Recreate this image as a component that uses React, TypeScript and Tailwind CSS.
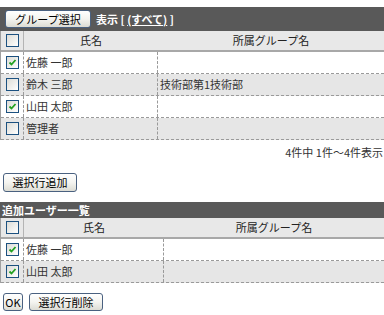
const FONT = "font-['MS_UI_Gothic','Noto_Sans_CJK_JP',sans-serif]";

function Check({ on = false }: { on?: boolean }) {
  return (
    <span className="flex h-[13px] w-[13px] items-center justify-center border border-[#1c5180] bg-gradient-to-br from-[#dcdcd7] to-white">
      {on && (
        <svg width="9" height="9" viewBox="0 0 9 9">
          <path d="M1.5 4.5 L3.5 6.5 L7.5 2" fill="none" stroke="#21a121" strokeWidth="1.8" />
        </svg>
      )}
    </span>
  );
}

function Btn({ children, className = "" }: { children: React.ReactNode; className?: string }) {
  return (
    <button
      className={`flex items-center justify-center rounded-[3px] border border-[#4a6180] bg-gradient-to-b from-white via-[#f4f4f0] to-[#dcdcd4] text-[11px] text-black ${className}`}
    >
      {children}
    </button>
  );
}

type Row = { name: string; group: string; on: boolean };

function Table({ rows, nameW }: { rows: Row[]; nameW: number }) {
  const cols = nameW === 134 ? "grid-cols-[23px_134px_1fr]" : "grid-cols-[23px_140px_1fr]";
  return (
    <div className="border-l border-[#a0a0a0]">
      <div className={`grid h-[21px] ${cols} border-b-2 border-[#a8a8a8] bg-[#e8e8e8] text-[11px] text-[#222]`}>
        <div className="flex items-center justify-center border-r border-[#b4b4b4]">
          <Check />
        </div>
        <div className="flex items-center justify-center">氏名</div>
        <div className="flex items-center justify-center">所属グループ名</div>
      </div>
      {rows.map((r, i) => (
        <div
          key={i}
          className={`grid h-[22px] ${cols} border-b border-dashed border-[#9a9a9a] text-[11px] text-[#333] ${
            i % 2 ? "bg-[#e6e6e6]" : "bg-white"
          }`}
        >
          <div className="flex items-center justify-center border-r border-dashed border-[#9a9a9a]">
            <Check on={r.on} />
          </div>
          <div className="flex items-center border-r border-dashed border-[#9a9a9a] pl-[2px]">{r.name}</div>
          <div className="flex items-center pl-[2px]">{r.group}</div>
        </div>
      ))}
    </div>
  );
}

export default function App() {
  const list: Row[] = [
    { name: "佐藤 一郎", group: "", on: true },
    { name: "鈴木 三郎", group: "技術部第1技術部", on: false },
    { name: "山田 太郎", group: "", on: true },
    { name: "管理者", group: "", on: false },
  ];
  const added: Row[] = [
    { name: "佐藤 一郎", group: "", on: true },
    { name: "山田 太郎", group: "", on: true },
  ];
  return (
    <div className={`h-[315px] w-[384px] overflow-hidden bg-white pt-[7px] ${FONT}`}>
      <div className="flex h-[24px] items-center bg-[#595959] pl-[5px]">
        <Btn className="h-[18px] w-[86px]">グループ選択</Btn>
        <span className="ml-[5px] flex items-center whitespace-pre text-[11px] font-bold text-white">
          表示 [ <span className="underline">(すべて)</span> ]
        </span>
      </div>
      <Table rows={list} nameW={134} />
      <div className="flex h-[22px] items-center justify-end whitespace-nowrap pt-[2px] pr-[1px] text-[11px] text-[#333]">
        4件中 1件～4件表示
      </div>
      <div className="pl-[3px] pt-[11px]">
        <Btn className="h-[19px] w-[74px]">選択行追加</Btn>
      </div>
      <div className="mt-[10px] flex h-[16px] items-center bg-[#595959] pl-[2px] text-[11px] font-bold text-white">
        追加ユーザー一覧
      </div>
      <Table rows={added} nameW={140} />
      <div className="flex gap-[6px] pl-[3px] pt-[10px]">
        <Btn className="h-[18px] w-[20px]">OK</Btn>
        <Btn className="h-[18px] w-[74px]">選択行削除</Btn>
      </div>
    </div>
  );
}
